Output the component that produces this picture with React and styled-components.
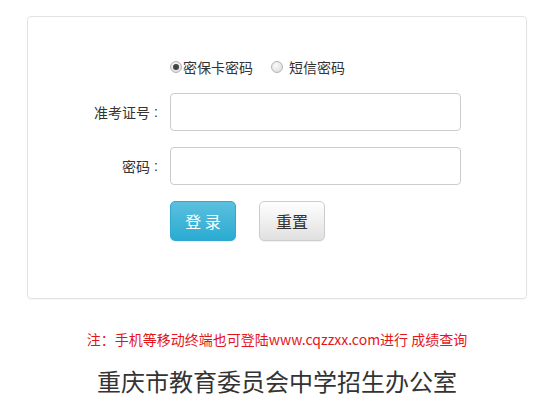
import React from "react";
import styled, { createGlobalStyle } from "styled-components";

const GlobalStyle = createGlobalStyle`
  body {
    margin: 0;
    background: #fff;
    font-family: "Noto Sans CJK SC", "Liberation Sans", sans-serif;
    color: #333;
  }
`;

const Page = styled.div`
  width: 500px;
  margin: 16px 0 0 27px;
  display: flex;
  flex-direction: column;
  align-items: center;
`;

const Card = styled.div`
  box-sizing: border-box;
  width: 100%;
  border: 1px solid #e3e3e3;
  border-radius: 4px;
  box-shadow: 0 1px 2px rgba(0, 0, 0, 0.04);
  padding: 39px 0 57px;
  display: grid;
  grid-template-columns: 134px 291px;
  column-gap: 8px;
  row-gap: 16px;
  align-items: center;
`;

const Label = styled.label`
  display: flex;
  justify-content: flex-end;
  font-size: 14px;
  color: #333;
  line-height: 20px;
`;

const Colon = styled.span`
  width: 12px;
  text-align: center;
  font-family: "Liberation Sans", sans-serif;
`;

const RadioRow = styled.div`
  grid-column: 2;
  display: flex;
  align-items: center;
  height: 21px;
  font-size: 14px;
  color: #333;
`;

const RadioOption = styled.label`
  display: flex;
  align-items: center;
  margin-right: ${(p) => p.$gap || 0}px;
`;

const RadioDot = styled.span`
  box-sizing: border-box;
  width: 12px;
  height: 12px;
  border-radius: 50%;
  border: 1px solid #b5b5b5;
  background: radial-gradient(circle at 40% 35%, #fafafa, #d8d8d8);
  margin-right: ${(p) => p.$space}px;
  position: relative;
  &::after {
    content: "";
    display: ${(p) => (p.$checked ? "block" : "none")};
    position: absolute;
    left: 2px;
    top: 2px;
    width: 6px;
    height: 6px;
    border-radius: 50%;
    background: #444;
  }
`;

const Input = styled.input`
  box-sizing: border-box;
  width: 291px;
  height: 38px;
  border: 1px solid #ccc;
  border-radius: 4px;
  padding: 0 10px;
  font-size: 14px;
  outline: none;
`;

const Buttons = styled.div`
  grid-column: 2;
  display: flex;
  gap: 23px;
`;

const Button = styled.button`
  box-sizing: border-box;
  width: 66px;
  height: 40px;
  border-radius: 5px;
  font-family: inherit;
  font-size: 16px;
  cursor: pointer;
  border: 1px solid ${(p) => (p.$primary ? "#32a8d0" : "#ccc")};
  color: ${(p) => (p.$primary ? "#fff" : "#333")};
  background: ${(p) =>
    p.$primary
      ? "linear-gradient(#5bc0de, #2aabd2)"
      : "linear-gradient(#fff, #e0e0e0)"};
  box-shadow: 0 1px 1px rgba(0, 0, 0, 0.06);
`;

const Note = styled.div`
  margin-top: 30px;
  font-size: 14px;
  line-height: 20px;
  color: #e4141b;
`;

const Title = styled.div`
  margin-top: 16px;
  font-size: 24px;
  line-height: 32px;
  color: #333;
`;

export default function App() {
  return (
    <>
      <GlobalStyle />
      <Page>
        <Card>
          <RadioRow>
            <RadioOption $gap={18}>
              <RadioDot $checked $space={1} />
              密保卡密码
            </RadioOption>
            <RadioOption>
              <RadioDot $space={6} />
              短信密码
            </RadioOption>
          </RadioRow>
          <Label>
            准考证号<Colon>:</Colon>
          </Label>
          <Input type="text" />
          <Label>
            密码<Colon>:</Colon>
          </Label>
          <Input type="password" />
          <Buttons>
            <Button $primary>登 录</Button>
            <Button>重置</Button>
          </Buttons>
        </Card>
        <Note>注：手机等移动终端也可登陆www.cqzzxx.com进行 成绩查询</Note>
        <Title>重庆市教育委员会中学招生办公室</Title>
      </Page>
    </>
  );
}
